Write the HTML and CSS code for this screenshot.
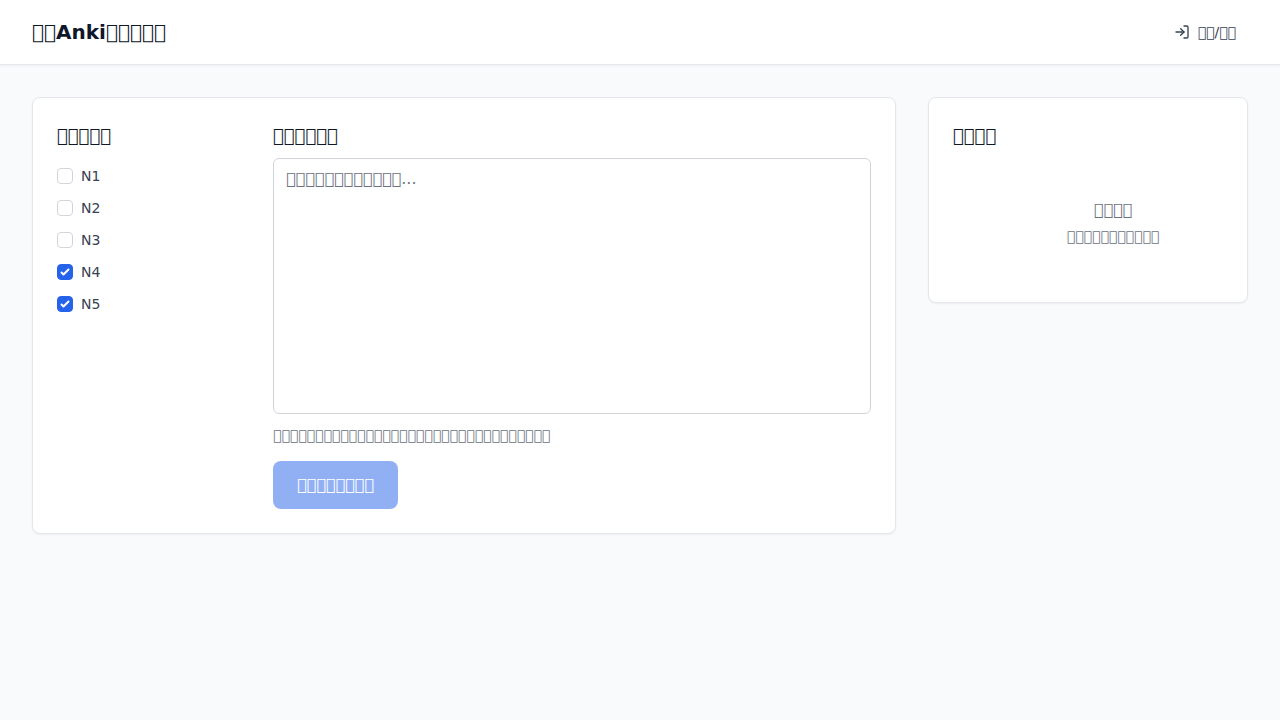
FILE: index.html
```html
<!DOCTYPE html>
<html lang="zh">
<head>
<meta charset="utf-8">
<meta name="viewport" content="width=device-width, initial-scale=1">
<title>Anki</title>
<link rel="stylesheet" href="styles.css">
</head>
<body>
<header class="topbar">
  <h1 class="brand">&#xE900;&#xE900;Anki&#xE900;&#xE900;&#xE900;&#xE900;&#xE900;</h1>
  <button type="button" class="login">
    <svg class="login-icon" viewBox="0 0 24 24" fill="none" stroke="currentColor" stroke-width="2" stroke-linecap="round" stroke-linejoin="round" aria-hidden="true"><path d="M15 3h4a2 2 0 0 1 2 2v14a2 2 0 0 1-2 2h-4"/><path d="M10 17l5-5-5-5"/><path d="M15 12H3"/></svg>
    <span>&#xE900;&#xE900;/&#xE900;&#xE900;</span>
  </button>
</header>
<main class="layout">
  <section class="card editor">
    <fieldset class="levels">
      <legend class="heading">&#xE900;&#xE900;&#xE900;&#xE900;&#xE900;</legend>
      <div class="level-list">
        <label class="level"><input type="checkbox" class="check">N1</label>
        <label class="level"><input type="checkbox" class="check">N2</label>
        <label class="level"><input type="checkbox" class="check">N3</label>
        <label class="level"><input type="checkbox" class="check" checked>N4</label>
        <label class="level"><input type="checkbox" class="check" checked>N5</label>
      </div>
    </fieldset>
    <div class="compose">
      <label class="heading" for="source">&#xE900;&#xE900;&#xE900;&#xE900;&#xE900;&#xE900;</label>
      <textarea id="source" class="source" placeholder="&#xE900;&#xE900;&#xE900;&#xE900;&#xE900;&#xE900;&#xE900;&#xE900;&#xE900;&#xE900;&#xE900;&#xE900;..."></textarea>
      <p class="hint">&#xE900;&#xE900;&#xE900;&#xE900;&#xE900;&#xE900;&#xE900;&#xE900;&#xE900;&#xE900;&#xE900;&#xE900;&#xE900;&#xE900;&#xE900;&#xE900;&#xE900;&#xE900;&#xE900;&#xE900;&#xE900;&#xE900;&#xE900;&#xE900;&#xE900;&#xE900;&#xE900;&#xE900;&#xE900;&#xE900;&#xE900;&#xE900;&#xE900;</p>
      <button type="button" class="submit" disabled>&#xE900;&#xE900;&#xE900;&#xE900;&#xE900;&#xE900;&#xE900;&#xE900;</button>
    </div>
  </section>
  <aside class="card">
    <h2 class="heading">&#xE900;&#xE900;&#xE900;&#xE900;</h2>
    <div class="empty">
      <p class="empty-title">&#xE900;&#xE900;&#xE900;&#xE900;</p>
      <p class="empty-note">&#xE900;&#xE900;&#xE900;&#xE900;&#xE900;&#xE900;&#xE900;&#xE900;&#xE900;&#xE900;&#xE900;</p>
    </div>
  </aside>
</main>
</body>
</html>
```
FILE: styles.css
```css
* { box-sizing: border-box; }

body {
  margin: 0;
  min-height: 100vh;
  background: #f9fafb;
  color: #111827;
  font: 16px/24px "DejaVu Sans", sans-serif;
}

h1, h2, p { margin: 0; }
button, textarea { font: inherit; }

.topbar {
  display: flex;
  align-items: center;
  justify-content: space-between;
  min-height: 65px;
  padding: 0 32px;
  background: #fff;
  border-bottom: 1px solid #e5e7eb;
  box-shadow: 0 1px 2px rgba(0, 0, 0, 0.05);
}

.brand {
  font-size: 20px;
  line-height: 28px;
  font-weight: 700;
  color: #0f172a;
}

.login {
  display: flex;
  align-items: center;
  gap: 8px;
  padding: 8px 12px;
  border: 0;
  border-radius: 6px;
  background: none;
  color: #374151;
  font-size: 14px;
  line-height: 20px;
}

.login-icon {
  width: 16px;
  height: 16px;
}

.layout {
  display: grid;
  grid-template-columns: minmax(0, 1fr) 320px;
  align-items: start;
  gap: 32px;
  padding: 32px;
}

.card {
  padding: 24px;
  background: #fff;
  border: 1px solid #e5e7eb;
  border-radius: 8px;
  box-shadow: 0 1px 2px rgba(0, 0, 0, 0.05);
}

.editor {
  display: flex;
  gap: 24px;
}

.heading {
  display: block;
  padding: 0;
  font-size: 18px;
  line-height: 28px;
  font-weight: 500;
}

.levels {
  flex: 0 0 192px;
  min-width: 0;
  margin: 0;
  padding: 0;
  border: 0;
}

.level-list {
  display: grid;
  justify-items: start;
  gap: 12px;
  padding-top: 16px;
}

.level {
  display: flex;
  align-items: center;
  gap: 8px;
  font-size: 14px;
  line-height: 20px;
  color: #374151;
}

.check {
  appearance: none;
  width: 16px;
  height: 16px;
  margin: 0;
  border: 1px solid #d1d5db;
  border-radius: 4px;
  background: #fff;
}

.check:checked {
  border-color: #2563eb;
  background: #2563eb url("data:image/svg+xml,%3Csvg viewBox='0 0 16 16' fill='white' xmlns='http://www.w3.org/2000/svg'%3E%3Cpath d='M12.207 4.793a1 1 0 010 1.414l-5 5a1 1 0 01-1.414 0l-2-2a1 1 0 011.414-1.414L6.5 9.086l4.293-4.293a1 1 0 011.414 0z'/%3E%3C/svg%3E") center / 16px 16px no-repeat;
}

.compose {
  flex: 1;
  min-width: 0;
}

.source {
  display: block;
  width: 100%;
  height: 256px;
  margin-top: 8px;
  padding: 8px 12px;
  border: 1px solid #d1d5db;
  border-radius: 6px;
  background: #fff;
  color: #111827;
  resize: none;
}

.source::placeholder { color: #6b7280; }

.hint {
  margin: 11px 0 16px;
  font-size: 14px;
  line-height: 20px;
  color: #6b7280;
}

.submit {
  display: block;
  padding: 12px 24px;
  border: 0;
  border-radius: 8px;
  background: #2563eb;
  color: #fff;
  font-weight: 500;
  opacity: 0.5;
}

.empty {
  display: grid;
  gap: 4px;
  margin-top: 16px;
  padding: 32px 0 32px 50px;
  text-align: center;
  color: #6b7280;
}

.empty-note {
  font-size: 14px;
  line-height: 20px;
}
```
